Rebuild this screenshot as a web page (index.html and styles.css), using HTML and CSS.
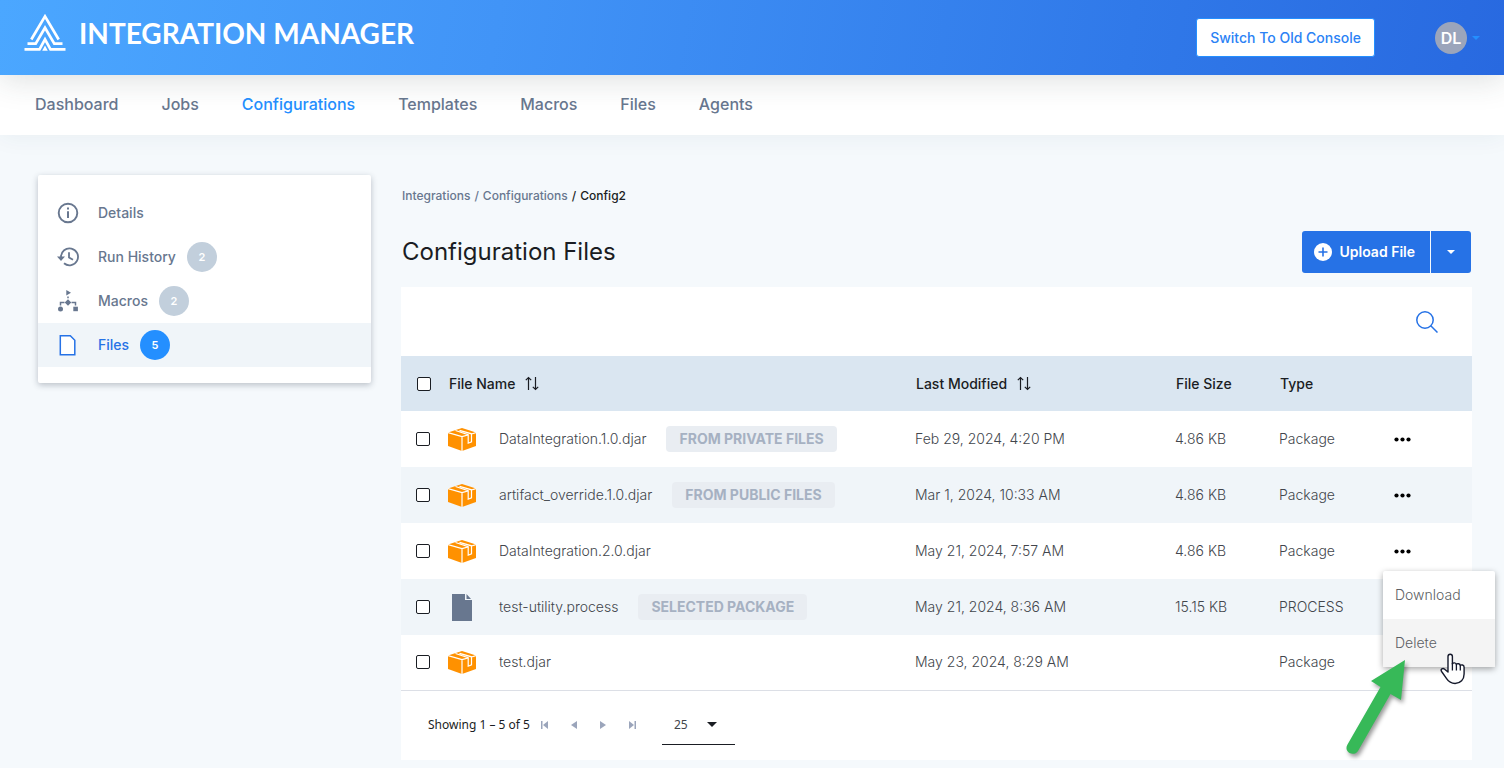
FILE: index.html
```html
<!DOCTYPE html>
<html lang="en">
<head>
<meta charset="utf-8">
<title>Integration Manager</title>
<link rel="stylesheet" href="styles.css">
</head>
<body>
<svg class="sprites" aria-hidden="true">
  <symbol id="box" viewBox="0 0 28 23">
    <path fill="#ff9100" d="M14 0 28 4.500v13.500L14 23 0 18V4.500z"/>
    <path fill="none" stroke="#fff" stroke-width="1.200" d="M0 4.700 14 8.700l6-1.700M23.500 6 28 4.700M14 8.700V23M7.500 2.500l12.700 4.300v8.400l3.300-1.400V5.800L11.500 2.300"/>
  </symbol>
  <symbol id="doc" viewBox="0 0 20 27">
    <path fill="#68778f" d="M0 0h13v6h7v21H0zM14.500 0 19 5h-4.500z"/>
  </symbol>
  <symbol id="sort" viewBox="0 0 14 15">
    <path fill="none" stroke="#1a1d23" stroke-width="1.200" d="M3.500 14V1.500M.8 4.200l2.700-2.700 2.700 2.700M10.500 1v12.500M7.800 10.800l2.700 2.700 2.700-2.700"/>
  </symbol>
  <symbol id="dots" viewBox="0 0 17 5">
    <circle cx="2.500" cy="2.500" r="2.100"/><circle cx="8.500" cy="2.500" r="2.100"/><circle cx="14.500" cy="2.500" r="2.100"/>
  </symbol>
</svg>

<header class="topbar">
  <a class="brand" href="#">
    <svg class="brand-mark" viewBox="0 0 42 37" aria-hidden="true">
      <g fill="none" stroke="#fff" stroke-width="2.700">
        <path d="M7.300 25.500 21 2.400l13.700 23.100"/>
        <path d="M3.500 29.700h8.200L21 13.700l9.300 16h8.200"/>
        <path d="M.5 35.300h15L21 25.300l5.500 10h15"/>
      </g>
      <path fill="#fff" d="m21 31.500 2.800 5.200h-5.600z"/>
    </svg>
    <span class="brand-name">INTEGRATION MANAGER</span>
  </a>
  <div class="account">
    <button class="switch" type="button">Switch To Old Console</button>
    <button class="user" type="button"><span class="avatar">DL</span><span class="caret caret-blue"></span></button>
  </div>
</header>

<nav class="mainnav" aria-label="Main">
  <a href="#">Dashboard</a>
  <a href="#">Jobs</a>
  <a class="current" href="#">Configurations</a>
  <a href="#">Templates</a>
  <a href="#">Macros</a>
  <a href="#">Files</a>
  <a href="#">Agents</a>
</nav>

<div class="page">
  <aside class="side">
    <a class="side-item" href="#">
      <svg class="side-icon" viewBox="0 0 22 22" aria-hidden="true"><circle cx="11" cy="11" r="9.300" fill="none" stroke="#68778f" stroke-width="1.900"/><path fill="#68778f" d="M10 5.500h2v2h-2zM10 9.300h2v6.700h-2z"/></svg>
      <span>Details</span>
    </a>
    <a class="side-item" href="#">
      <svg class="side-icon" viewBox="0 0 22 22" aria-hidden="true"><g fill="none" stroke="#68778f" stroke-width="1.800"><path d="M4 12V11a8.500 8.500 0 1 1 3 6.300"/><path d="M12 6.200v5.200l4 2.400"/></g><path fill="#68778f" d="M0 10.500h8L4 15z"/></svg>
      <span>Run History</span><span class="badge">2</span>
    </a>
    <a class="side-item" href="#">
      <svg class="side-icon" viewBox="0 0 22 22" aria-hidden="true"><g fill="#68778f"><path d="M9.300 0 14 2.700 9.300 5.500zM11 9.300l3.300 3.200L11 15.700l-3.300-3.200z"/><circle cx="3.500" cy="19" r="2.500"/><path d="M16.300 16.700h4.600v4.500h-4.600z"/></g><path fill="none" stroke="#68778f" stroke-width="1.500" d="M11 6.500v1.700M7.500 12.500h-4v3M14.500 12.500h4v3"/></svg>
      <span>Macros</span><span class="badge">2</span>
    </a>
    <a class="side-item active" href="#">
      <svg class="side-icon" viewBox="0 0 22 22" aria-hidden="true"><path fill="#fff" stroke="#2672e6" stroke-width="1.500" d="M3.300 1.700h10l4.500 4.500v14.500H3.300z"/></svg>
      <span>Files</span><span class="badge">5</span>
    </a>
  </aside>

  <main class="content">
    <nav class="crumbs" aria-label="Breadcrumb">
      <a href="#">Integrations</a><span>/</span><a href="#">Configurations</a><span class="here">/</span><span class="here">Config2</span>
    </nav>
    <div class="titlebar">
      <h1>Configuration Files</h1>
      <div class="upload">
        <button class="upload-main" type="button">
          <svg class="plus" viewBox="0 0 18 18" aria-hidden="true"><circle cx="9" cy="9" r="9" fill="#fff"/><path stroke="#2672e6" stroke-width="1.600" d="M9 4.500v9M4.500 9h9"/></svg>
          Upload File
        </button>
        <button class="upload-more" type="button" aria-label="More upload options"><span class="caret"></span></button>
      </div>
    </div>

    <section class="panel">
      <div class="tools">
        <button class="plain" type="button" aria-label="Search">
          <svg class="search-icon" viewBox="0 0 22 22" aria-hidden="true"><path fill="none" stroke="#2672e6" stroke-width="1.500" d="M9 .8a8.200 8.200 0 1 0 0 16.400A8.200 8.200 0 1 0 9 .8M15 15l6.500 6.500"/></svg>
        </button>
      </div>
      <table class="files">
        <thead>
          <tr>
            <th class="c-check"><input type="checkbox" aria-label="Select all files"></th>
            <th class="c-name"><span class="sorted">File Name <svg class="sort" aria-hidden="true"><use href="#sort"/></svg></span></th>
            <th class="c-date"><span class="sorted">Last Modified <svg class="sort" aria-hidden="true"><use href="#sort"/></svg></span></th>
            <th class="c-size">File Size</th>
            <th class="c-type">Type</th>
            <th class="c-more"></th>
          </tr>
        </thead>
        <tbody>
          <tr>
            <td><input type="checkbox" aria-label="Select DataIntegration.1.0.djar"></td>
            <td><div class="file"><svg class="box" aria-hidden="true"><use href="#box"/></svg><span>DataIntegration.1.0.djar</span><span class="tag">FROM PRIVATE FILES</span></div></td>
            <td>Feb 29, 2024, 4:20 PM</td><td>4.86 KB</td><td>Package</td>
            <td><button class="plain" type="button" aria-label="Actions"><svg class="dots" aria-hidden="true"><use href="#dots"/></svg></button></td>
          </tr>
          <tr>
            <td><input type="checkbox" aria-label="Select artifact_override.1.0.djar"></td>
            <td><div class="file"><svg class="box" aria-hidden="true"><use href="#box"/></svg><span>artifact_override.1.0.djar</span><span class="tag">FROM PUBLIC FILES</span></div></td>
            <td>Mar 1, 2024, 10:33 AM</td><td>4.86 KB</td><td>Package</td>
            <td><button class="plain" type="button" aria-label="Actions"><svg class="dots" aria-hidden="true"><use href="#dots"/></svg></button></td>
          </tr>
          <tr>
            <td><input type="checkbox" aria-label="Select DataIntegration.2.0.djar"></td>
            <td><div class="file"><svg class="box" aria-hidden="true"><use href="#box"/></svg><span>DataIntegration.2.0.djar</span></div></td>
            <td>May 21, 2024, 7:57 AM</td><td>4.86 KB</td><td>Package</td>
            <td class="open">
              <button class="plain" type="button" aria-label="Actions"><svg class="dots" aria-hidden="true"><use href="#dots"/></svg></button>
              <div class="menu">
                <button type="button">Download</button>
                <button class="hover" type="button">Delete</button>
                <svg class="pointer" viewBox="0 0 28 34" aria-hidden="true"><path fill="#fff" stroke="#15192b" stroke-width="1.400" stroke-linejoin="round" d="M9 20V4.500a2.200 2.200 0 0 1 4.400 0V12c.4-1.700 3.700-1.500 4 .6.800-1.600 3.700-1 3.900 1 .9-1.300 3.800-.8 3.800 1.600V22c0 5.500-3.600 9.500-9 9.500-4.200 0-6.400-1.600-8.500-4.800l-5-7.200c-1.500-2.300 1.200-3.800 3-2.300z"/><path fill="none" stroke="#15192b" stroke-width="1.300" d="M13.400 11v7.500M17.400 12.500v6M21.300 13.500v5"/></svg>
                <svg class="arrow" viewBox="0 0 70 100" aria-hidden="true"><path fill="#37b958" d="m65 5-4 40-10.500-6L18 96c-2 3-5.500 3.500-8.500 2-3-2-4-5-2-8.500L40.500 32 31 26z"/></svg>
              </div>
            </td>
          </tr>
          <tr>
            <td><input type="checkbox" aria-label="Select test-utility.process"></td>
            <td><div class="file"><svg class="doc" aria-hidden="true"><use href="#doc"/></svg><span>test-utility.process</span><span class="tag">SELECTED PACKAGE</span></div></td>
            <td>May 21, 2024, 8:36 AM</td><td>15.15 KB</td><td>PROCESS</td><td></td>
          </tr>
          <tr>
            <td><input type="checkbox" aria-label="Select test.djar"></td>
            <td><div class="file"><svg class="box" aria-hidden="true"><use href="#box"/></svg><span>test.djar</span></div></td>
            <td>May 23, 2024, 8:29 AM</td><td></td><td>Package</td><td></td>
          </tr>
        </tbody>
      </table>
      <div class="pager">
        <span class="showing">Showing 1 – 5 of 5</span>
        <div class="steps">
          <button class="plain" type="button" aria-label="First page"><svg viewBox="0 0 8 8"><path d="M0 0h1.500v8H0zM7 0v8L2 4z"/></svg></button>
          <button class="plain" type="button" aria-label="Previous page"><svg viewBox="0 0 8 8"><path d="M7 0v8L1 4z"/></svg></button>
          <button class="plain" type="button" aria-label="Next page"><svg viewBox="0 0 8 8"><path d="M1 0v8l6-4z"/></svg></button>
          <button class="plain" type="button" aria-label="Last page"><svg viewBox="0 0 8 8"><path d="M6.500 0H8v8H6.500zM1 0v8l5-4z"/></svg></button>
        </div>
        <div class="size">
          <select aria-label="Rows per page"><option>25</option><option>50</option></select>
          <span class="caret caret-dark"></span>
        </div>
      </div>
    </section>
  </main>
</div>
</body>
</html>
```
FILE: styles.css
```css
* { box-sizing: border-box; }
body {
  margin: 0;
  background: #f5f9fc;
  color: #1a1d23;
  font: 14px/20px Inter, "Open Sans", sans-serif;
}
a { color: inherit; text-decoration: none; }
button, select { font: inherit; border: 0; cursor: pointer; }
svg { display: block; }
.sprites { position: absolute; width: 0; height: 0; }
.plain { display: block; padding: 0; background: none; }

.topbar {
  position: relative;
  z-index: 1;
  display: flex;
  justify-content: space-between;
  height: 75px;
  padding: 0 24px;
  background: linear-gradient(100deg, #4ba7ff 0%, #4194f7 33%, #3079e9 75%, #2869e0 100%);
  box-shadow: 0 4px 32px rgba(40, 60, 60, .17);
}
.brand { display: flex; align-items: flex-start; gap: 13px; padding-top: 14px; color: #fff; }
.brand-mark { width: 42px; height: 37px; }
.brand-name { font: 700 28px/38px Lato, sans-serif; }
.account { display: flex; align-items: center; gap: 60px; }
.switch {
  height: 39px;
  padding: 0 13px;
  border: 1px solid #248fff;
  border-radius: 3px;
  background: #fff;
  color: #2b82f5;
  font-weight: 500;
}
.user { display: flex; align-items: center; gap: 5px; padding: 0; background: none; }
.avatar {
  width: 32px;
  border-radius: 50%;
  background: #9ba5bb;
  color: #fff;
  font-size: 16px;
  font-weight: 600;
  line-height: 32px;
}
.caret { border: 4px solid transparent; border-top-color: #fff; border-bottom: 0; }
.caret-blue { border-top-color: #248fff; }
.caret-dark { border-width: 5px; border-top-color: #1a1d23; border-bottom: 0; }

.mainnav {
  display: flex;
  gap: 43px;
  height: 60px;
  padding: 0 35px;
  background: #fff;
  color: #68778f;
  font-size: 16px;
  font-weight: 500;
  line-height: 58px;
  box-shadow: 0 2px 24px rgba(40, 60, 80, .06);
}
.mainnav .current { color: #248fff; }

.page { display: flex; align-items: flex-start; gap: 30px; padding: 40px 32px 8px 38px; }
.side {
  flex: 0 0 333px;
  padding: 16px 0;
  border-radius: 2px;
  background: #fff;
  box-shadow: 0 2px 6px rgba(30, 40, 60, .28);
}
.side-item { display: flex; align-items: center; height: 44px; padding: 0 19px; color: #68778f; font-weight: 500; }
.side-icon { width: 22px; height: 22px; margin-right: 19px; }
.side-item.active { background: #f0f5f9; color: #2672e6; }
.badge {
  width: 30px;
  margin-left: 11px;
  border-radius: 50%;
  background: #c2cfdc;
  color: #fff;
  font-size: 11px;
  font-weight: 600;
  line-height: 30px;
  text-align: center;
}
.active .badge { background: #248fff; }

.content { flex: 1; min-width: 0; }
.crumbs { display: flex; gap: 4px; padding: 11px 1px; color: #68778f; font-size: 12px; font-weight: 500; }
.here { color: #1a1d23; }
.titlebar { display: flex; align-items: center; justify-content: space-between; padding: 14px 1px; }
h1 { margin: 0; font-size: 24px; font-weight: 400; line-height: 32px; }
.upload { display: flex; gap: 1px; color: #fff; font-weight: 600; }
.upload button { height: 42px; background: #2672e6; color: inherit; }
.upload-main { display: flex; align-items: center; gap: 7px; padding: 0 15px 0 12px; border-radius: 3px 0 0 3px; }
.upload-more { display: grid; place-items: center; width: 40px; padding: 0; border-radius: 0 3px 3px 0; }
.plus { width: 18px; height: 18px; }

.panel { background: #fff; }
.tools { display: flex; align-items: center; justify-content: flex-end; height: 69px; padding: 0 34px; }
.search-icon { width: 22px; height: 22px; }

.files { width: 100%; border-collapse: collapse; table-layout: fixed; text-align: left; }
.files th { height: 55px; padding: 0 0 0 1px; background: #dae6f1; font-weight: 500; }
.files td { height: 56px; padding: 0; color: #42464c; font-weight: 300; white-space: nowrap; }
.files tbody tr:nth-child(even) { background: #f0f5f9; }
.files tbody tr:last-child { border-bottom: 1px solid #dcdfe6; }
.files tbody tr:last-child td { height: 55px; }
.c-check { width: 47px; }
.c-date { width: 260px; }
.c-size { width: 104px; }
.c-type { width: 115px; }
.c-more { width: 78px; }
.files input {
  appearance: none;
  display: block;
  width: 14px;
  height: 14px;
  margin: 0 0 0 15px;
  border: 1px solid #1a1d23;
  border-radius: 2px;
  background: #fff;
}
.sorted { display: flex; align-items: center; gap: 10px; }
.sort { width: 14px; height: 15px; }
.file { display: flex; align-items: center; }
.box { width: 28px; height: 23px; margin-right: 23px; }
.doc { width: 20px; height: 27px; margin: 0 27px 0 4px; }
.tag {
  margin-left: 20px;
  padding: 3px 13px;
  border-radius: 4px;
  background: #e9edf2;
  color: #a6b1c2;
  font-weight: 700;
}
.dots { width: 17px; height: 5px; }
.open { position: relative; }

.menu {
  position: absolute;
  z-index: 2;
  top: 48px;
  right: -23px;
  width: 112px;
  border-radius: 2px;
  background: #fff;
  box-shadow: 0 2px 6px rgba(0, 0, 0, .35);
}
.menu button { display: block; width: 100%; height: 48px; padding: 0 12px; background: none; color: #5c5f64; text-align: left; }
.menu .hover { background: #f4f4f4; }
.pointer { position: absolute; top: 81px; left: 56px; width: 28px; height: 34px; }
.arrow { position: absolute; top: 84px; left: -43px; width: 70px; height: 100px; filter: drop-shadow(2px 3px 2px rgba(0, 0, 0, .4)); }

.pager { display: flex; align-items: center; height: 69px; padding: 0 27px; }
.showing { font: 400 12px/20px "Noto Sans", sans-serif; }
.steps { display: flex; gap: 21px; margin: 0 26px 0 11px; }
.steps svg { width: 8px; height: 8px; fill: #9ba5bb; }
.size { display: flex; align-items: center; width: 73px; height: 40px; padding: 0 18px 0 12px; border-bottom: 1px solid #1a1d23; }
.size select { flex: 1; padding: 0; appearance: none; background: none; color: #42464c; font: 400 12px/20px "Noto Sans", sans-serif; }
```
